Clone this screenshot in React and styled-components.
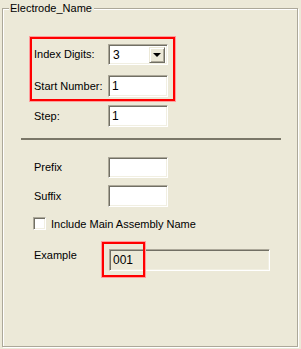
import React from "react";
import styled, { createGlobalStyle } from "styled-components";

const Global = createGlobalStyle`
  html, body {
    margin: 0;
    padding: 0;
    background: #ece9d8;
  }
  body {
    font-family: "Liberation Sans", Arial, sans-serif;
    font-size: 11px;
    color: #000;
  }
`;

const Page = styled.div`
  width: 301px;
  height: 349px;
  padding: 8px 0 0 2px;
  box-sizing: border-box;
`;

const Group = styled.div`
  position: relative;
  width: 296px;
  height: 339px;
  box-sizing: border-box;
  border: 1px solid #aca899;
  box-shadow: 1px 1px 0 #fff, inset 1px 1px 0 #fff;
  display: flex;
  flex-direction: column;
  align-items: flex-start;
`;

const Legend = styled.span`
  position: absolute;
  top: -7px;
  left: 6px;
  padding: 0 2px 0 1px;
  background: #ece9d8;
  line-height: 13px;
`;

const Highlight = styled.div`
  margin: 28px 0 0 27px;
  width: 145px;
  height: 64px;
  box-sizing: border-box;
  border: 2px solid #ff0000;
  box-shadow: 0 0 0 1px #ff9c9c;
  padding: 5px 0 0 2px;
  display: flex;
  flex-direction: column;
  gap: 10px;
`;

const Row = styled.div`
  display: flex;
  align-items: center;
  margin-top: ${(p) => p.$top || 0}px;
  margin-left: ${(p) => p.$left || 0}px;
`;

const Label = styled.span`
  width: ${(p) => p.$w || 74}px;
  flex: none;
  line-height: 13px;
`;

const sunken = `
  box-sizing: border-box;
  border: 1px solid;
  border-color: #aca899 #fff #fff #aca899;
  box-shadow: inset 1px 1px 0 #716f64, inset -1px -1px 0 #f1efe2;
`;

const Input = styled.div`
  ${sunken}
  width: ${(p) => p.$w || 60}px;
  height: ${(p) => p.$h || 21}px;
  background: ${(p) => (p.$readonly ? "#ece9d8" : "#fff")};
  padding: 3px 0 0 3px;
  line-height: 14px;
  font-size: 12px;
`;

const Combo = styled.div`
  ${sunken}
  width: 60px;
  height: 21px;
  background: #fff;
  display: flex;
  align-items: center;
  justify-content: space-between;
  padding: 2px;
`;

const ComboText = styled.span`
  padding-left: 2px;
  font-size: 12px;
  line-height: 14px;
`;

const DropButton = styled.div`
  width: 16px;
  height: 16px;
  box-sizing: border-box;
  background: #ece9d8;
  border: 1px solid;
  border-color: #ece9d8 #716f64 #716f64 #ece9d8;
  box-shadow: inset 1px 1px 0 #fff, inset -1px -1px 0 #aca899;
  display: flex;
  align-items: center;
  justify-content: center;
`;

const Arrow = styled.span`
  width: 0;
  height: 0;
  border-left: 4px solid transparent;
  border-right: 4px solid transparent;
  border-top: 4px solid #000;
  margin-top: 1px;
`;

const Separator = styled.div`
  margin: 11px 0 0 18px;
  width: 260px;
  height: 2px;
  background: #7a7768;
`;

const CheckBox = styled.div`
  ${sunken}
  width: 13px;
  height: 13px;
  background: #fff;
  flex: none;
  margin-right: 5px;
`;

const ExampleWrap = styled.div`
  position: relative;
`;

const Mark = styled.div`
  position: absolute;
  left: -7px;
  top: -7px;
  width: 43px;
  height: 35px;
  box-sizing: border-box;
  border: 2px solid #ff0000;
  box-shadow: 0 0 0 1px #ff9c9c;
`;

export default function App() {
  return (
    <>
      <Global />
      <Page>
        <Group>
          <Legend>Electrode_Name</Legend>
          <Highlight>
            <Row>
              <Label>Index Digits:</Label>
              <Combo>
                <ComboText>3</ComboText>
                <DropButton>
                  <Arrow />
                </DropButton>
              </Combo>
            </Row>
            <Row>
              <Label>Start Number:</Label>
              <Input $h={22}>1</Input>
            </Row>
          </Highlight>
          <Row $top={4} $left={31}>
            <Label>Step:</Label>
            <Input $h={22}>1</Input>
          </Row>
          <Separator />
          <Row $top={17} $left={31}>
            <Label>Prefix</Label>
            <Input />
          </Row>
          <Row $top={7} $left={31}>
            <Label>Suffix</Label>
            <Input $h={22} />
          </Row>
          <Row $top={10} $left={30}>
            <CheckBox />
            <span>Include Main Assembly Name</span>
          </Row>
          <Row $top={19} $left={31} style={{ alignItems: "flex-start" }}>
            <Label $w={75}>Example</Label>
            <ExampleWrap>
              <Input $w={161} $h={22} $readonly>001</Input>
              <Mark />
            </ExampleWrap>
          </Row>
        </Group>
      </Page>
    </>
  );
}
